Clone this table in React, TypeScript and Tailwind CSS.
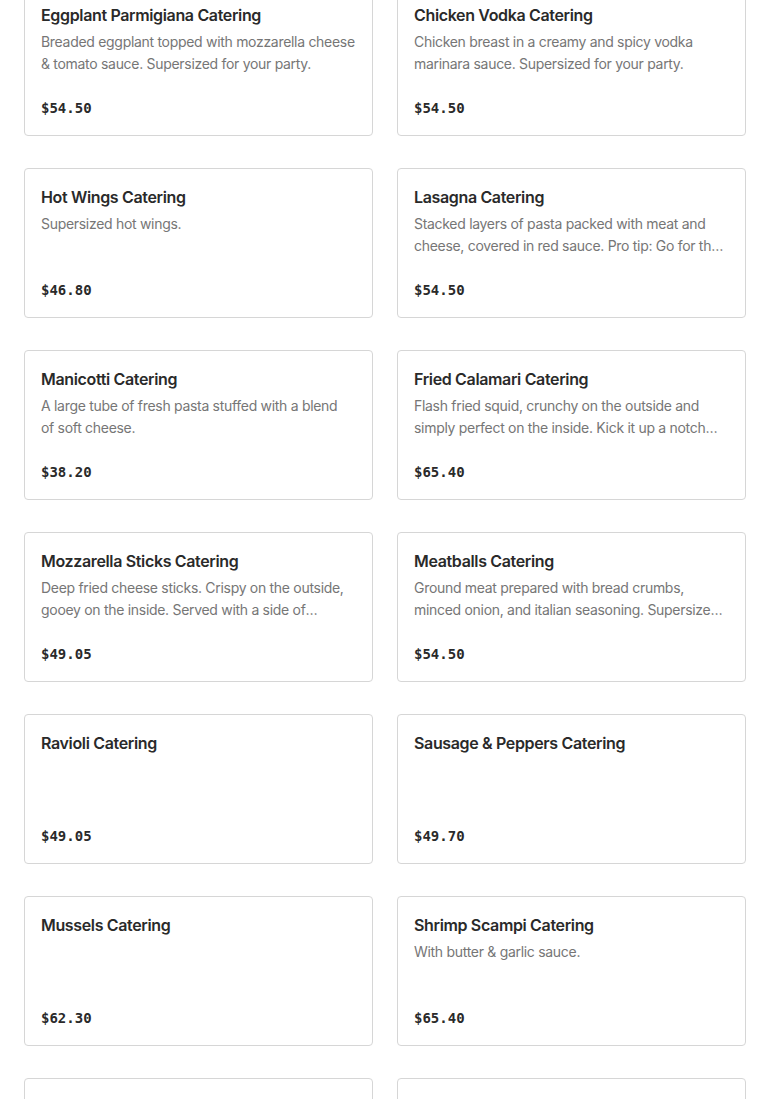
const items = [
  {
    name: 'Eggplant Parmigiana Catering',
    desc: 'Breaded eggplant topped with mozzarella cheese & tomato sauce. Supersized for your party.',
    price: '$54.50',
  },
  {
    name: 'Chicken Vodka Catering',
    desc: 'Chicken breast in a creamy and spicy vodka marinara sauce. Supersized for your party.',
    price: '$54.50',
  },
  { name: 'Hot Wings Catering', desc: 'Supersized hot wings.', price: '$46.80' },
  {
    name: 'Lasagna Catering',
    desc: 'Stacked layers of pasta packed with meat and cheese, covered in red sauce. Pro tip: Go for the meat sauce upgrade.',
    price: '$54.50',
  },
  {
    name: 'Manicotti Catering',
    desc: 'A large tube of fresh pasta stuffed with a blend of\u00a0soft cheese.',
    price: '$38.20',
  },
  {
    name: 'Fried Calamari Catering',
    desc: 'Flash fried squid, crunchy on the outside and simply perfect on the inside. Kick it up a notch with hot cherry peppers.',
    price: '$65.40',
  },
  {
    name: 'Mozzarella Sticks Catering',
    desc: 'Deep fried cheese sticks. Crispy on the outside, gooey on the inside. Served with a side of marinara sauce.',
    price: '$49.05',
  },
  {
    name: 'Meatballs Catering',
    desc: 'Ground meat prepared with bread crumbs, minced onion, and italian seasoning. Supersized for your party.',
    price: '$54.50',
  },
  { name: 'Ravioli Catering', desc: '', price: '$49.05' },
  { name: 'Sausage & Peppers Catering', desc: '', price: '$49.70' },
  { name: 'Mussels Catering', desc: '', price: '$62.30' },
  { name: 'Shrimp Scampi Catering', desc: 'With butter & garlic sauce.', price: '$65.40' },
  { name: 'Baked Ziti Pasta Catering', desc: 'Ziti pasta baked with ricotta and mozzarella.', price: '$49.05' },
  { name: 'Chicken Francese Pasta Catering', desc: 'Egg battered chicken in lemon butter sauce.', price: '$54.50' },
];

function Card({ name, desc, price }: { name: string; desc: string; price: string }) {
  return (
    <div className="h-[150px] border border-[#d6d6d6] rounded-[4px] bg-white px-4 pt-4 pb-[17px] flex flex-col justify-between">
      <div>
        <h3 className="text-[16px] leading-6 font-semibold text-[#2a2a2a] tracking-[-0.35px]">{name}</h3>
        {desc && (
          <p className="mt-1 text-[14px] leading-[22px] text-[#767676] tracking-[-0.3px] line-clamp-2">{desc}</p>
        )}
      </div>
      <div className="text-[14px] leading-5 font-bold text-[#2a2a2a] font-['DejaVu_Sans_Mono',monospace]">
        {price}
      </div>
    </div>
  );
}

export default function App() {
  return (
    <div className="bg-white min-h-screen font-['Inter',sans-serif] overflow-hidden">
      <div className="px-6 -mt-[14px] grid grid-cols-2 gap-x-6 gap-y-8">
        {items.map((it) => (
          <Card key={it.name} {...it} />
        ))}
      </div>
    </div>
  );
}
